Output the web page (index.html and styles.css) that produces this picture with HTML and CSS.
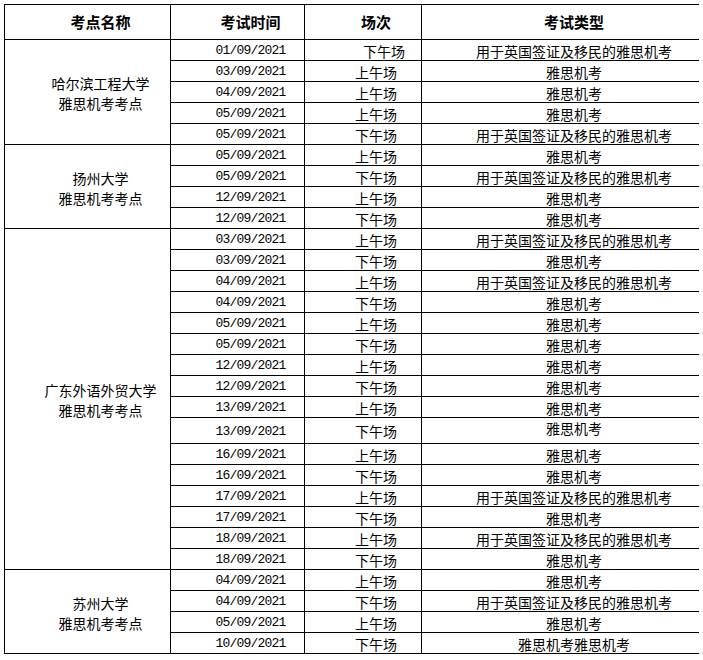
FILE: index.html
```html
<!DOCTYPE html>
<html lang="zh-CN">
<head>
<meta charset="utf-8">
<title>雅思机考考点</title>
<link rel="stylesheet" href="styles.css">
</head>
<body>
<table class="exam-table">
  <colgroup>
    <col class="c-site"><col class="c-date"><col class="c-session"><col class="c-type">
  </colgroup>
  <thead>
    <tr class="head-row"><th>考点名称</th><th>考试时间</th><th>场次</th><th>考试类型</th></tr>
  </thead>
  <tbody>
    <tr><td class="site site-tight" rowspan="5"><span class="site-line">哈尔滨工程大学</span><span class="site-line">雅思机考考点</span></td><td class="date">01/09/2021</td><td class="session shift">下午场</td><td class="type">用于英国签证及移民的雅思机考</td></tr>
    <tr><td class="date">03/09/2021</td><td class="session">上午场</td><td class="type">雅思机考</td></tr>
    <tr><td class="date">04/09/2021</td><td class="session">上午场</td><td class="type">雅思机考</td></tr>
    <tr><td class="date">05/09/2021</td><td class="session">上午场</td><td class="type">雅思机考</td></tr>
    <tr><td class="date">05/09/2021</td><td class="session">下午场</td><td class="type">用于英国签证及移民的雅思机考</td></tr>

    <tr><td class="site" rowspan="4"><span class="site-line">扬州大学</span><span class="site-line">雅思机考考点</span></td><td class="date">05/09/2021</td><td class="session">上午场</td><td class="type">雅思机考</td></tr>
    <tr><td class="date">05/09/2021</td><td class="session">下午场</td><td class="type">用于英国签证及移民的雅思机考</td></tr>
    <tr><td class="date">12/09/2021</td><td class="session">上午场</td><td class="type">雅思机考</td></tr>
    <tr><td class="date">12/09/2021</td><td class="session">下午场</td><td class="type">雅思机考</td></tr>

    <tr><td class="site" rowspan="16"><span class="site-line">广东外语外贸大学</span><span class="site-line">雅思机考考点</span></td><td class="date">03/09/2021</td><td class="session">上午场</td><td class="type">用于英国签证及移民的雅思机考</td></tr>
    <tr><td class="date">03/09/2021</td><td class="session">下午场</td><td class="type">雅思机考</td></tr>
    <tr><td class="date">04/09/2021</td><td class="session">上午场</td><td class="type">用于英国签证及移民的雅思机考</td></tr>
    <tr><td class="date">04/09/2021</td><td class="session">下午场</td><td class="type">雅思机考</td></tr>
    <tr><td class="date">05/09/2021</td><td class="session">上午场</td><td class="type">雅思机考</td></tr>
    <tr><td class="date">05/09/2021</td><td class="session">下午场</td><td class="type">雅思机考</td></tr>
    <tr><td class="date">12/09/2021</td><td class="session">上午场</td><td class="type">雅思机考</td></tr>
    <tr><td class="date">12/09/2021</td><td class="session">下午场</td><td class="type">雅思机考</td></tr>
    <tr><td class="date">13/09/2021</td><td class="session">上午场</td><td class="type">雅思机考</td></tr>
    <tr class="tall"><td class="date">13/09/2021</td><td class="session">下午场</td><td class="type type-top">雅思机考</td></tr>
    <tr><td class="date">16/09/2021</td><td class="session">上午场</td><td class="type">雅思机考</td></tr>
    <tr><td class="date">16/09/2021</td><td class="session">下午场</td><td class="type">雅思机考</td></tr>
    <tr><td class="date">17/09/2021</td><td class="session">上午场</td><td class="type">用于英国签证及移民的雅思机考</td></tr>
    <tr><td class="date">17/09/2021</td><td class="session">下午场</td><td class="type">雅思机考</td></tr>
    <tr><td class="date">18/09/2021</td><td class="session">上午场</td><td class="type">用于英国签证及移民的雅思机考</td></tr>
    <tr><td class="date">18/09/2021</td><td class="session">下午场</td><td class="type">雅思机考</td></tr>

    <tr><td class="site" rowspan="4"><span class="site-line">苏州大学</span><span class="site-line">雅思机考考点</span></td><td class="date">04/09/2021</td><td class="session">上午场</td><td class="type">雅思机考</td></tr>
    <tr><td class="date">04/09/2021</td><td class="session">下午场</td><td class="type">用于英国签证及移民的雅思机考</td></tr>
    <tr><td class="date">05/09/2021</td><td class="session">上午场</td><td class="type">雅思机考</td></tr>
    <tr><td class="date">10/09/2021</td><td class="session">下午场</td><td class="type">雅思机考雅思机考</td></tr>
  </tbody>
</table>
</body>
</html>
```

FILE: styles.css
```css
html, body {
  background: #ffffff;
}
body {
  margin: 4px;
  font-family: "Noto Sans CJK SC", "Liberation Sans", sans-serif;
  color: #000000;
}
.exam-table {
  border-collapse: collapse;
  table-layout: fixed;
  width: 696px;
}
.c-site { width: 166px; }
.c-date { width: 134px; }
.c-session { width: 117px; }
.c-type { width: 279px; }

.exam-table th,
.exam-table td {
  border: 1px solid #000000;
  padding: 0 0 0 26px;
  text-align: center;
  vertical-align: middle;
  white-space: nowrap;
  overflow: hidden;
}
.exam-table th {
  font-size: 15px;
  font-weight: 700;
  line-height: 18px;
}
.head-row {
  height: 35px;
}
.exam-table tbody tr {
  height: 21px;
}
.exam-table tbody tr.tall {
  height: 26px;
}
.exam-table td {
  font-size: 14px;
  line-height: 16px;
  padding-top: 1px;
}
.exam-table td.date {
  font-family: "Liberation Mono", monospace;
  font-size: 13px;
  letter-spacing: -0.8px;
  padding-top: 2px;
}
.exam-table td.site {
  line-height: 20px;
  padding-top: 2px;
}
.site-line {
  display: block;
}
.exam-table td.site-tight {
  line-height: 20px;
  padding-top: 1px;
}
.exam-table td.shift {
  padding-left: 42px;
}
.exam-table td.type-top {
  vertical-align: top;
  padding-top: 2px;
}
```
